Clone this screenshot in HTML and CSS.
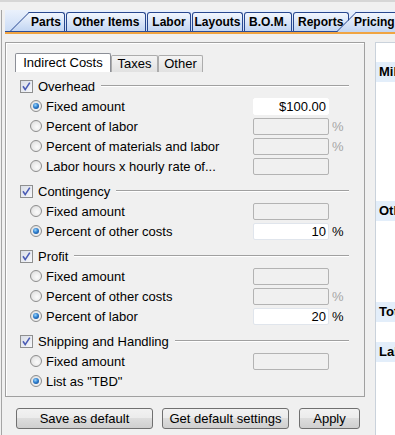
FILE: index.html
```html
<!DOCTYPE html>
<html lang="en">
  <head>
    <meta charset="UTF-8" />
    <meta name="viewport" content="width=device-width, initial-scale=1.0" />
    <title>Pricing</title>
    <link rel="stylesheet" href="styles.css">
  </head>
  <body>
    <div class="topbar"></div>
    <div class="frame">
      <div class="tabstrip">
        <span class="tab slant parts">Parts</span>
        <span class="tab t-other">Other Items</span>
        <span class="tab t-labor">Labor</span>
        <span class="tab t-layouts">Layouts</span>
        <span class="tab t-bom">B.O.M.</span>
        <span class="tab t-reports">Reports</span>
        <span class="tab slant pricing">Pricing</span>
      </div>

      <div class="content">
        <div class="main">
          <div class="panel">
            <div class="subtabs">
              <span class="subtab active s-indirect">Indirect Costs</span>
              <span class="subtab s-taxes">Taxes</span>
              <span class="subtab s-other">Other</span>
            </div>

            <div class="pane">
              <div class="group">
                <div class="group-head">
                  <span class="check"><svg viewBox="0 0 11 11" width="11" height="11"><path d="M2 5.2 L4.2 8.6 L8.8 1.6" fill="none" stroke="#4a5cb5" stroke-width="1.6"/></svg></span>
                  <span>Overhead</span>
                  <span class="rule"></span>
                </div>
                <div class="opt">
                  <span class="radio on"></span>
                  <span class="opt-label">Fixed amount</span>
                  <span class="field focus">$100.00</span>
                  <span class="pct"></span>
                </div>
                <div class="opt">
                  <span class="radio"></span>
                  <span class="opt-label">Percent of labor</span>
                  <span class="field"></span>
                  <span class="pct">%</span>
                </div>
                <div class="opt">
                  <span class="radio"></span>
                  <span class="opt-label">Percent of materials and labor</span>
                  <span class="field"></span>
                  <span class="pct">%</span>
                </div>
                <div class="opt">
                  <span class="radio"></span>
                  <span class="opt-label">Labor hours x hourly rate of...</span>
                  <span class="field"></span>
                  <span class="pct"></span>
                </div>
              </div>

              <div class="group">
                <div class="group-head">
                  <span class="check"><svg viewBox="0 0 11 11" width="11" height="11"><path d="M2 5.2 L4.2 8.6 L8.8 1.6" fill="none" stroke="#4a5cb5" stroke-width="1.6"/></svg></span>
                  <span>Contingency</span>
                  <span class="rule"></span>
                </div>
                <div class="opt">
                  <span class="radio"></span>
                  <span class="opt-label">Fixed amount</span>
                  <span class="field"></span>
                  <span class="pct"></span>
                </div>
                <div class="opt">
                  <span class="radio on"></span>
                  <span class="opt-label">Percent of other costs</span>
                  <span class="field on">10</span>
                  <span class="pct on">%</span>
                </div>
              </div>

              <div class="group">
                <div class="group-head">
                  <span class="check"><svg viewBox="0 0 11 11" width="11" height="11"><path d="M2 5.2 L4.2 8.6 L8.8 1.6" fill="none" stroke="#4a5cb5" stroke-width="1.6"/></svg></span>
                  <span>Profit</span>
                  <span class="rule"></span>
                </div>
                <div class="opt">
                  <span class="radio"></span>
                  <span class="opt-label">Fixed amount</span>
                  <span class="field"></span>
                  <span class="pct"></span>
                </div>
                <div class="opt">
                  <span class="radio"></span>
                  <span class="opt-label">Percent of other costs</span>
                  <span class="field"></span>
                  <span class="pct">%</span>
                </div>
                <div class="opt">
                  <span class="radio on"></span>
                  <span class="opt-label">Percent of labor</span>
                  <span class="field on">20</span>
                  <span class="pct on">%</span>
                </div>
              </div>

              <div class="group">
                <div class="group-head">
                  <span class="check"><svg viewBox="0 0 11 11" width="11" height="11"><path d="M2 5.2 L4.2 8.6 L8.8 1.6" fill="none" stroke="#4a5cb5" stroke-width="1.6"/></svg></span>
                  <span>Shipping and Handling</span>
                  <span class="rule"></span>
                </div>
                <div class="opt">
                  <span class="radio"></span>
                  <span class="opt-label">Fixed amount</span>
                  <span class="field"></span>
                  <span class="pct"></span>
                </div>
                <div class="opt">
                  <span class="radio on"></span>
                  <span class="opt-label">List as "TBD"</span>
                </div>
              </div>
            </div>
          </div>

          <div class="buttons">
            <button class="btn b-save">Save as default</button>
            <button class="btn b-get">Get default settings</button>
            <button class="btn b-apply">Apply</button>
          </div>
        </div>

        <div class="side">
          <div class="band">Mileage</div>
          <div class="side-body s1"></div>
          <div class="band">Other</div>
          <div class="side-body s2"></div>
          <div class="band">Totals</div>
          <div class="side-body s3"></div>
          <div class="band">Labor</div>
        </div>
      </div>
    </div>
  </body>
</html>
```

FILE: styles.css
```css
* {
  box-sizing: border-box;
}
body {
  margin: 0;
  width: 395px;
  height: 435px;
  overflow: hidden;
  background-color: #f0f0f0;
  font-family: "Liberation Sans", Arial, sans-serif;
  font-size: 13px;
  color: #000;
}
.topbar {
  height: 10px;
  border-top: 2px solid #d6d6d6;
}
.frame {
  margin-left: 1px;
  height: 425px;
  border-left: 1px solid #a5a5a5;
}

/* main tab strip */
.tabstrip {
  display: flex;
  align-items: flex-end;
  height: 24px;
  margin-left: 3px;
  padding-left: 5px;
  border-bottom: 2px solid #f0a442;
  background: linear-gradient(to top, #2b4e9a 0, #2b4e9a 1px, transparent 1px),
    linear-gradient(#eaf1fc, #c9dbf5);
}
.tab {
  position: relative;
  flex: none;
  height: 19px;
  margin-right: 1px;
  margin-bottom: 1px;
  border: 1px solid #27478f;
  border-bottom: none;
  border-radius: 3px 3px 0 0;
  background: linear-gradient(#f1f6fe, #c2d5f2);
  font-weight: bold;
  font-size: 12px;
  line-height: 18px;
  text-align: center;
  white-space: nowrap;
}
.tab.slant {
  border: none;
  background: none;
  isolation: isolate;
  text-align: left;
  line-height: 20px;
}
.tab.slant::before {
  content: "";
  position: absolute;
  top: 0;
  bottom: 0;
  left: 20px;
  right: 0;
  border-top: 1px solid #27478f;
  border-right: 1px solid #27478f;
  border-radius: 0 3px 0 0;
  background: linear-gradient(#f1f6fe, #c2d5f2);
  z-index: -1;
}
.tab.slant::after {
  content: "";
  position: absolute;
  top: 0;
  bottom: 0;
  left: 0;
  width: 30px;
  border-top: 1px solid #27478f;
  border-left: 1px solid #27478f;
  background: linear-gradient(#f1f6fe, #c2d5f2);
  transform: skewX(-45deg);
  transform-origin: bottom left;
  z-index: -1;
}
.parts {
  width: 55px;
  padding-left: 21px;
}
.t-other { width: 80px; }
.t-labor { width: 44px; }
.t-layouts { width: 51px; }
.t-bom { width: 48px; }
.t-reports {
  width: 56px;
  text-align: left;
  padding-left: 4px;
}
.pricing {
  width: 80px;
  height: 20px;
  margin-left: -14px;
  margin-bottom: 0;
  padding-left: 18px;
}
.pricing::before,
.pricing::after {
  background: linear-gradient(#fff2df, #fbc67c);
}
.pricing::before {
  left: 13px;
}
.pricing::after {
  transform: skewX(-33deg);
}

/* page */
.content {
  display: flex;
  padding-top: 8px;
  padding-left: 3px;
}
.main {
  width: 360px;
  flex: none;
}
.panel {
  height: 355px;
  padding: 10px 0 0 9px;
  border: 1px solid #a0a0a0;
  box-shadow: inset 1px 1px 0 #fff;
}
.subtabs {
  display: flex;
  align-items: flex-end;
  height: 19px;
}
.subtab {
  height: 17px;
  border: 1px solid #acacac;
  border-bottom: none;
  border-radius: 2px 2px 0 0;
  background: linear-gradient(#f4f4f4, #e1e1e1);
  line-height: 16px;
  text-align: center;
}
.subtab.active {
  height: 19px;
  background: #fff;
  border-color: #8c8f97;
  line-height: 18px;
}
.s-indirect { width: 96px; }
.s-taxes { width: 47px; }
.s-other { width: 45px; }

.pane {
  width: 334px;
  padding-top: 4px;
}
.group + .group {
  margin-top: 5px;
}
.group-head {
  display: flex;
  align-items: center;
  height: 20px;
  padding-left: 5px;
}
.check {
  display: flex;
  align-items: center;
  justify-content: center;
  width: 13px;
  height: 13px;
  margin-right: 5px;
  border: 1px solid #8e8f8f;
  background: linear-gradient(135deg, #d9dde6, #f7f8fb);
}
.rule {
  flex: 1;
  height: 2px;
  margin-left: 6px;
  border-top: 1px solid #a0a0a0;
  border-bottom: 1px solid #fff;
}
.opt {
  display: flex;
  align-items: center;
  height: 20px;
  padding-left: 15px;
}
.radio {
  position: relative;
  flex: none;
  width: 12px;
  height: 12px;
  margin-right: 4px;
  border: 1px solid #8d8d8d;
  border-radius: 50%;
  background: radial-gradient(circle at 60% 60%, #fbfbfb 0, #e9e9e9 55%, #cfcfcf 100%);
}
.radio.on::after {
  content: "";
  position: absolute;
  top: 2px;
  left: 2px;
  right: 2px;
  bottom: 2px;
  border-radius: 50%;
  background: radial-gradient(circle at 40% 35%, #9ad6fb 0, #2f7fcf 45%, #0d3d80 100%);
}
.opt-label {
  flex: 1;
  white-space: nowrap;
}
.field {
  width: 76px;
  height: 17px;
  padding-right: 2px;
  border: 1px solid #b3b3b3;
  border-radius: 2px;
  background: #f0f0f0;
  line-height: 15px;
  text-align: right;
}
.field.on {
  background: #fff;
  border-color: #e0e5ec;
}
.field.focus {
  background: #fff;
  border-color: #fff;
}
.pct {
  width: 20px;
  padding-left: 3px;
  color: #a6a6a6;
}
.pct.on {
  color: #000;
}

/* bottom buttons */
.buttons {
  display: flex;
  margin-top: 11px;
  padding-left: 11px;
}
.btn {
  height: 21px;
  padding: 0;
  border: 1px solid #707070;
  border-radius: 3px;
  background: linear-gradient(#f2f2f2 0, #ebebeb 50%, #dddddd 50%, #cfcfcf 100%);
  font-family: "Liberation Sans", Arial, sans-serif;
  font-size: 13px;
  color: #000;
}
.b-save { width: 137px; }
.b-get {
  width: 127px;
  margin-left: 9px;
}
.b-apply {
  width: 61px;
  margin-left: 10px;
}

/* right side list */
.side {
  flex: 1;
  height: 393px;
  margin-left: 10px;
  padding-top: 19px;
  border-left: 1px solid #cad2db;
  border-top: 1px solid #cad2db;
  background: #fff;
  overflow: hidden;
}
.band {
  height: 20px;
  padding-left: 3px;
  background: #e3eefa;
  font-weight: bold;
  line-height: 20px;
  white-space: nowrap;
}
.s1 { height: 119px; }
.s2 { height: 81px; }
.s3 { height: 20px; }
```
